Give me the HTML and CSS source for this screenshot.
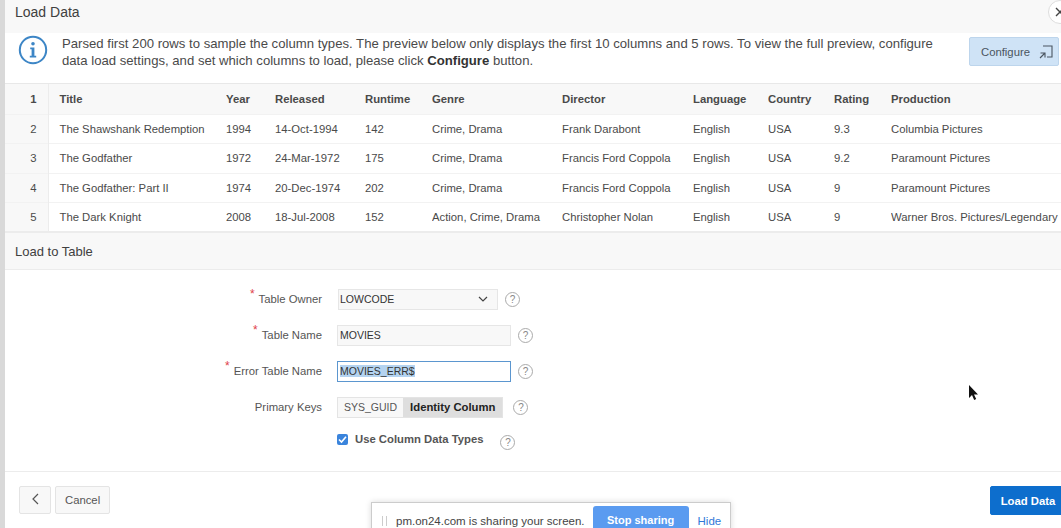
FILE: index.html
```html
<!DOCTYPE html>
<html lang="en">
<head>
    <meta charset="UTF-8">
    <title>Load Data</title>
    <link rel="stylesheet" href="styles.css">
</head>
<body>
    <div class="dialog">
        <div class="dialog-title">
            <h1>Load Data</h1>
            <button class="close" type="button" aria-label="Close">
                <svg width="10" height="10" viewBox="0 0 10 10"><path d="M1 1l8 8M9 1l-8 8" stroke="#444" stroke-width="1.4" fill="none"/></svg>
            </button>
        </div>

        <div class="message">
            <svg class="info-icon" width="30" height="30" viewBox="0 0 30 30">
                <circle cx="15" cy="15" r="13.2" fill="none" stroke="#3d86c6" stroke-width="2"/>
                <circle cx="15" cy="8.8" r="1.8" fill="#3d86c6"/>
                <path d="M12.2 12.6h4.2v8.2h1.8v1.6h-6.4v-1.6h1.8v-6.6h-1.4z" fill="#3d86c6"/>
            </svg>
            <p>Parsed first 200 rows to sample the column types. The preview below only displays the first 10 columns and 5 rows. To view the full preview, configure data load settings, and set which columns to load, please click <b>Configure</b> button.</p>
            <button class="configure" type="button">
                Configure
                <svg width="14" height="14" viewBox="0 0 14 14"><path d="M4 1h9v11H8M1 13l5-5M1.5 8H6v4.5" stroke="#4a5560" stroke-width="1.1" fill="none"/></svg>
            </button>
        </div>

        <table class="preview">
            <thead>
                <tr>
                    <th class="num">1</th><th>Title</th><th>Year</th><th>Released</th><th>Runtime</th><th>Genre</th><th>Director</th><th>Language</th><th>Country</th><th>Rating</th><th>Production</th>
                </tr>
            </thead>
            <tbody>
                <tr>
                    <td class="num">2</td><td>The Shawshank Redemption</td><td>1994</td><td>14-Oct-1994</td><td>142</td><td>Crime, Drama</td><td>Frank Darabont</td><td>English</td><td>USA</td><td>9.3</td><td>Columbia Pictures</td>
                </tr>
                <tr>
                    <td class="num">3</td><td>The Godfather</td><td>1972</td><td>24-Mar-1972</td><td>175</td><td>Crime, Drama</td><td>Francis Ford Coppola</td><td>English</td><td>USA</td><td>9.2</td><td>Paramount Pictures</td>
                </tr>
                <tr>
                    <td class="num">4</td><td>The Godfather: Part II</td><td>1974</td><td>20-Dec-1974</td><td>202</td><td>Crime, Drama</td><td>Francis Ford Coppola</td><td>English</td><td>USA</td><td>9</td><td>Paramount Pictures</td>
                </tr>
                <tr>
                    <td class="num">5</td><td>The Dark Knight</td><td>2008</td><td>18-Jul-2008</td><td>152</td><td>Action, Crime, Drama</td><td>Christopher Nolan</td><td>English</td><td>USA</td><td>9</td><td>Warner Bros. Pictures/Legendary</td>
                </tr>
            </tbody>
        </table>

        <div class="region-title">Load to Table</div>

        <form class="load-form">
            <div class="row owner">
                <label class="required">Table Owner</label>
                <div class="select">LOWCODE
                    <svg width="10" height="6" viewBox="0 0 10 6"><path d="M1 1l4 4 4-4" stroke="#444" stroke-width="1.2" fill="none"/></svg>
                </div>
                <span class="help">?</span>
            </div>
            <div class="row">
                <label class="required">Table Name</label>
                <div class="input">MOVIES</div>
                <span class="help">?</span>
            </div>
            <div class="row">
                <label class="required">Error Table Name</label>
                <div class="input focused"><span class="selected">MOVIES_ERR$</span></div>
                <span class="help">?</span>
            </div>
            <div class="row keys-row">
                <label>Primary Keys</label>
                <div class="pills">
                    <span class="pill">SYS_GUID</span>
                    <span class="pill active">Identity Column</span>
                </div>
                <span class="help">?</span>
            </div>
            <div class="row check-row">
                <label></label>
                <span class="checkbox">
                    <svg width="9" height="9" viewBox="0 0 9 9"><path d="M1 4.5l2.5 2.5L8 1.8" stroke="#fff" stroke-width="1.6" fill="none"/></svg>
                </span>
                <span class="check-label">Use Column Data Types</span>
                <span class="help">?</span>
            </div>
        </form>

        <div class="dialog-footer">
            <div class="footer-left">
                <button class="btn back" type="button" aria-label="Back">
                    <svg width="7" height="12" viewBox="0 0 7 12"><path d="M6 1L1 6l5 5" stroke="#555" stroke-width="1.2" fill="none"/></svg>
                </button>
                <button class="btn" type="button">Cancel</button>
            </div>
            <button class="btn primary" type="button">Load Data</button>
        </div>
    </div>

    <!-- browser bar lying over the page -->
    <div class="share-bar">
        <span class="grip"></span>
        <span class="share-text">pm.on24.com is sharing your screen.</span>
        <span class="stop">Stop sharing</span>
        <span class="hide">Hide</span>
    </div>

    <svg class="cursor" width="12" height="17" viewBox="0 0 12 17"><path d="M1 1v13l3-3 2.2 5 2-1-2.2-4.6H10z" fill="#111"/></svg>
</body>
</html>
```

FILE: styles.css
```css
* {
    margin: 0;
    padding: 0;
    box-sizing: border-box;
}

html, body {
    height: 528px;
    overflow: hidden;
}

body {
    font-family: "Liberation Sans", Arial, sans-serif;
    font-size: 11.3px;
    color: #404040;
    background-color: #d9d9d9;
    padding-left: 5px;
    position: relative;
}

button {
    font-family: inherit;
}

.dialog {
    background-color: #fff;
    height: 528px;
    display: flex;
    flex-direction: column;
}

.dialog-title {
    height: 33px;
    flex-shrink: 0;
    background-color: #f8f8f8;
    display: flex;
    align-items: center;
    justify-content: space-between;
    padding-left: 10px;
}

.dialog-title h1 {
    font-size: 14px;
    font-weight: normal;
    color: #404040;
    padding-bottom: 9px;
}

.close {
    width: 24px;
    height: 24px;
    margin-right: -11px;
    margin-bottom: 9px;
    padding-left: 6px;
    display: flex;
    align-items: center;
    border: 1px solid #ddd;
    border-radius: 50%;
    background-color: #fff;
}

.message {
    height: 51px;
    flex-shrink: 0;
    display: flex;
    align-items: flex-start;
    padding: 2px 0 0 13px;
    border-bottom: 1px solid #e8e8e8;
}

.info-icon {
    flex-shrink: 0;
}

.message p {
    width: 875px;
    margin-left: 14px;
    font-size: 13.15px;
    line-height: 17px;
    color: #4a4a4a;
}

.message b {
    color: #333;
}

.configure {
    width: 90px;
    height: 29px;
    margin-left: 32px;
    margin-top: 2px;
    flex-shrink: 0;
    display: flex;
    align-items: center;
    gap: 9px;
    padding-left: 11px;
    font-size: 11.3px;
    color: #4a5560;
    background-color: #cfe3f6;
    border: 1px solid #bdd5ec;
    border-radius: 2px;
}

.preview {
    border-collapse: collapse;
    table-layout: fixed;
    width: 1056px;
    flex-shrink: 0;
    border-bottom: 2px solid #ececec;
}

.preview th, .preview td {
    text-align: left;
    white-space: nowrap;
    overflow: hidden;
    color: #4a4a4a;
}

.preview th {
    height: 30px;
    background-color: #f8f8f8;
    font-weight: bold;
}

.preview td {
    height: 29.5px;
    border-top: 1px solid #f2f2f2;
}

.preview .num {
    width: 43px;
    background-color: #f8f8f8;
    border-right: 1px solid #ececec;
    text-align: right;
    padding-right: 11px;
}

.preview th:nth-child(2) { width: 178px; }
.preview th:nth-child(3) { width: 49px; }
.preview th:nth-child(4) { width: 90px; }
.preview th:nth-child(5) { width: 67px; }
.preview th:nth-child(6) { width: 130px; }
.preview th:nth-child(7) { width: 131px; }
.preview th:nth-child(8) { width: 75px; }
.preview th:nth-child(9) { width: 66px; }
.preview th:nth-child(10) { width: 57px; }

.preview th:nth-child(2), .preview td:nth-child(2) {
    padding-left: 11px;
}

.region-title {
    height: 37px;
    flex-shrink: 0;
    line-height: 37px;
    padding-left: 10px;
    font-size: 13px;
    color: #404040;
    background-color: #f8f8f8;
    border-bottom: 1px solid #ececec;
}

.load-form {
    height: 202px;
    flex-shrink: 0;
    padding-top: 11px;
    display: flex;
    flex-direction: column;
    border-bottom: 1px solid #ececec;
}

.row {
    height: 36px;
    flex-shrink: 0;
    display: flex;
    align-items: center;
}

.row label {
    width: 317px;
    text-align: right;
    margin-right: 15px;
    color: #555;
}

.required::before {
    content: "*";
    position: relative;
    top: -5px;
    color: #e0414a;
    font-size: 12px;
    margin-right: 4px;
}

.select, .input {
    height: 21px;
    display: flex;
    align-items: center;
    padding-left: 2px;
    font-size: 10.5px;
    color: #333;
    background-color: #f8f8f8;
    border: 1px solid #e6e6e6;
}

.select {
    width: 160px;
    margin-left: 1px;
    padding-left: 1px;
    justify-content: space-between;
    padding-right: 9px;
}

.input {
    width: 174px;
}

.input.focused {
    background-color: #fff;
    border: 1px solid #5b96cf;
}

.selected {
    background-color: #b4d3f0;
}

.help {
    width: 15px;
    height: 15px;
    margin-left: 7px;
    border: 1px solid #aaa;
    border-radius: 50%;
    font-size: 10px;
    line-height: 13px;
    text-align: center;
    color: #888;
}

.pills {
    display: flex;
    height: 21px;
    border: 1px solid #e4e4e4;
    background-color: #f8f8f8;
}

.pill {
    padding: 0 6px;
    line-height: 19px;
    font-size: 10.5px;
    color: #555;
}

.pill.active {
    padding: 0 7px;
    font-size: 11.3px;
    background-color: #dedede;
    color: #222;
    font-weight: bold;
}

.keys-row .help {
    margin-left: 10px;
}

.check-row {
    height: 28px;
}

.checkbox {
    width: 11px;
    height: 11px;
    background-color: #3a84dc;
    border-radius: 2px;
    display: flex;
    align-items: center;
    justify-content: center;
}

.check-label {
    margin-left: 7px;
    font-weight: bold;
    color: #555;
}

.check-row .help {
    margin-left: 17px;
    margin-top: 6px;
}

.dialog-footer {
    flex: 1;
    display: flex;
    justify-content: space-between;
    padding-top: 14px;
    padding-left: 14px;
}

.footer-left {
    display: flex;
    gap: 4px;
}

.btn {
    height: 28px;
    padding: 0 9px;
    font-size: 11.3px;
    color: #555;
    white-space: nowrap;
    background-color: #f8f8f8;
    border: 1px solid #e4e4e4;
    border-radius: 2px;
}

.back {
    width: 32px;
}

.primary {
    width: 76px;
    height: 29px;
    margin-right: -5px;
    padding: 0;
    background-color: #0d6ecd;
    border-color: #0d6ecd;
    color: #fff;
    font-weight: bold;
}

.share-bar {
    position: absolute;
    left: 371px;
    top: 502px;
    width: 360px;
    height: 34px;
    display: flex;
    align-items: center;
    padding: 4px 10px 0;
    font-size: 11.5px;
    color: #444;
    background-color: #fff;
    border: 1px solid #ccc;
    box-shadow: 0 0 6px rgba(0, 0, 0, 0.15);
}

.grip {
    width: 5px;
    height: 10px;
    margin-right: 9px;
    flex-shrink: 0;
    border-left: 1px solid #ccc;
    border-right: 1px solid #ccc;
}

.share-text {
    white-space: nowrap;
}

.stop {
    margin-left: 8px;
    width: 96px;
    height: 30px;
    flex-shrink: 0;
    line-height: 28px;
    font-size: 11px;
    font-weight: bold;
    text-align: center;
    color: #fff;
    background-color: #5a9bf0;
    border-radius: 3px;
}

.hide {
    margin-left: 9px;
    color: #2f78d8;
}

.cursor {
    position: absolute;
    left: 968px;
    top: 384px;
}
```
